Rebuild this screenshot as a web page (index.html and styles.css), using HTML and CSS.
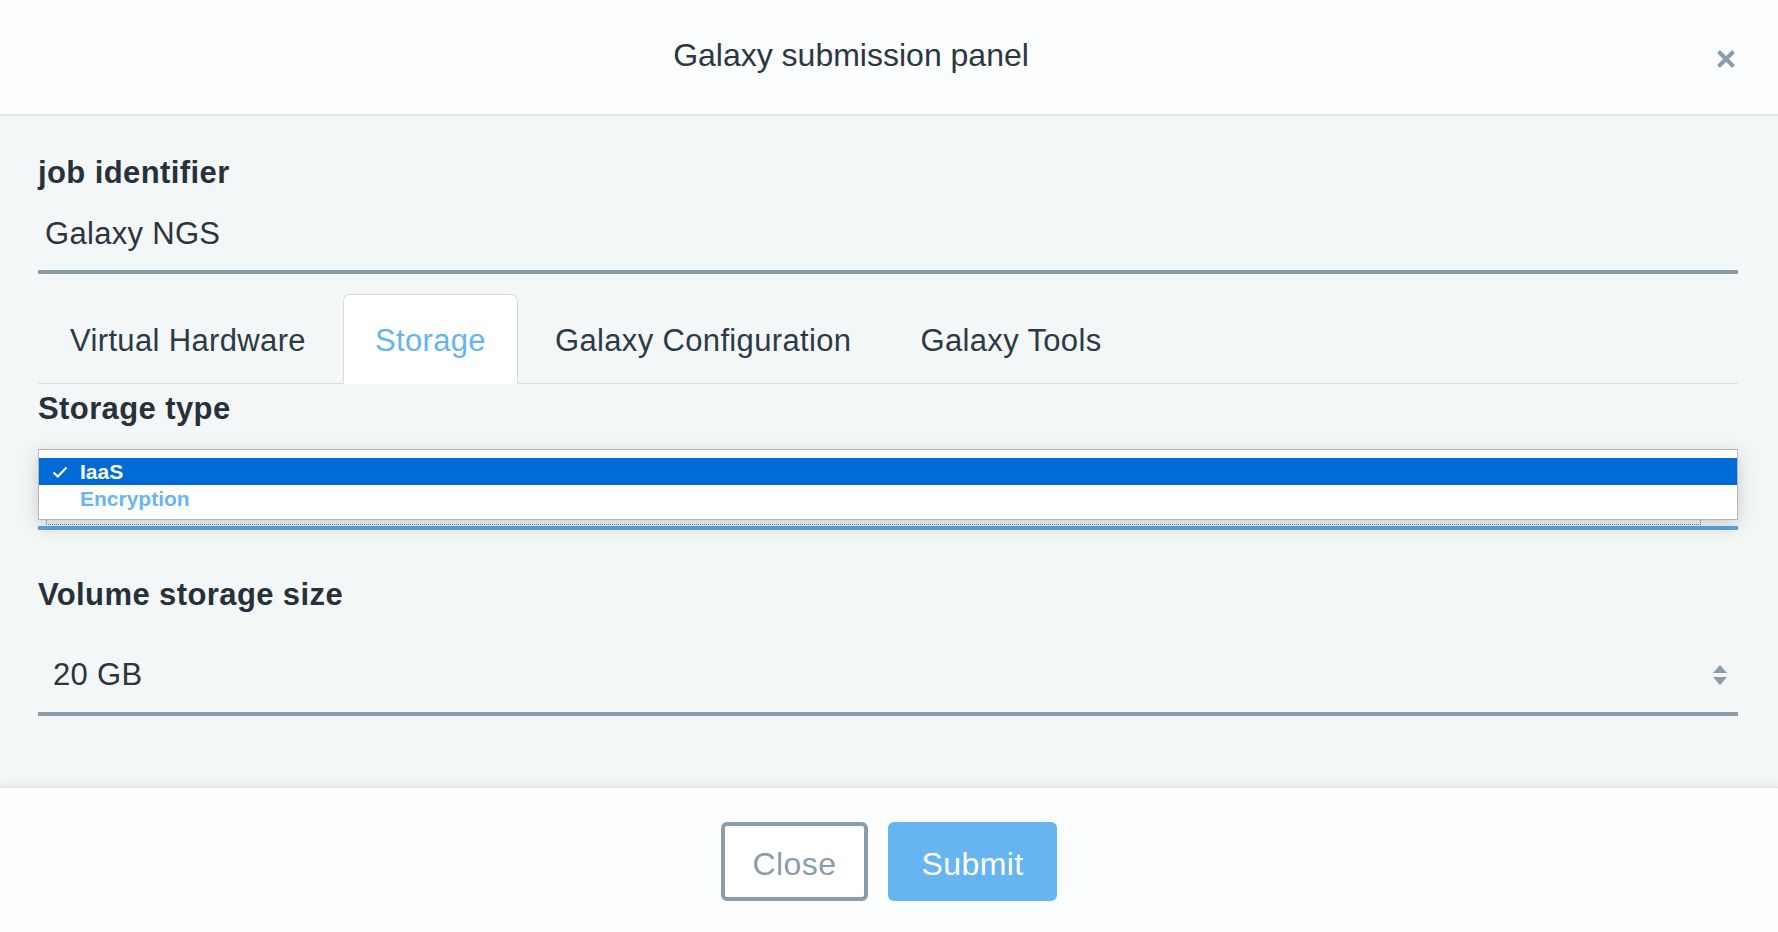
FILE: index.html
```html
<!DOCTYPE html>
<html lang="en">
<head>
<meta charset="utf-8">
<title>Galaxy submission panel</title>
<link rel="stylesheet" href="styles.css">
</head>
<body>
<div class="modal">
  <header class="modal-header">
    <h1 class="modal-title">Galaxy submission panel</h1>
    <button class="close-btn" aria-label="Close">
      <svg width="20" height="20" viewBox="0 0 20 20"><path d="M2.5 2.5 L17.5 17.5 M17.5 2.5 L2.5 17.5" stroke="#8a9dad" stroke-width="4" stroke-linecap="butt" fill="none"/></svg>
    </button>
  </header>

  <main class="modal-body">
    <label class="field-label first">job identifier</label>
    <div class="text-input">Galaxy NGS</div>

    <nav class="tabs">
      <a class="tab">Virtual Hardware</a>
      <a class="tab active">Storage</a>
      <a class="tab">Galaxy Configuration</a>
      <a class="tab">Galaxy Tools</a>
    </nav>

    <section class="tab-pane">
      <label class="field-label storage-label">Storage type</label>
      <div class="select-wrap">
        <div class="focus-ring"></div>
        <ul class="dropdown">
          <li class="option selected">
            <svg class="check" width="16" height="12" viewBox="0 0 16 12"><path d="M1.5 6.5 L5.8 10.5 L14.5 1.5" stroke="#fff" stroke-width="2.2" fill="none"/></svg>
            <span>IaaS</span>
          </li>
          <li class="option">Encryption</li>
        </ul>
      </div>

      <label class="field-label volume-label">Volume storage size</label>
      <div class="number-input">
        <span>20 GB</span>
        <svg class="spinner" width="14" height="20" viewBox="0 0 14 20"><path d="M7 0 L14 8 L0 8 Z M0 12 L14 12 L7 20 Z" fill="#8a9dad"/></svg>
      </div>
    </section>
  </main>

  <footer class="modal-footer">
    <button class="btn btn-outline">Close</button>
    <button class="btn btn-primary">Submit</button>
  </footer>
</div>
</body>
</html>
```

FILE: styles.css
```css
* { box-sizing: border-box; }

html, body {
  margin: 0;
  padding: 0;
  height: 932px;
  overflow: hidden;
}

body {
  font-family: "Liberation Sans", Arial, Helvetica, sans-serif;
  color: #2a3540;
  background: #f4f7f8;
}

.modal {
  display: flex;
  flex-direction: column;
  height: 932px;
}

/* Header */
.modal-header {
  height: 116px;
  flex: 0 0 116px;
  background: #fcfdfe;
  border-bottom: 2px solid #e3e5e8;
  display: flex;
  align-items: flex-start;
}

.modal-title {
  flex: 1;
  margin: 35px 0 0 0;
  padding-right: 14px;
  text-align: center;
  font-weight: normal;
  font-size: 32px;
  line-height: 40px;
  color: #2b3742;
}

.close-btn {
  margin: 49px 42px 0 0;
  width: 20px;
  height: 20px;
  padding: 0;
  border: 0;
  background: none;
  display: flex;
}

/* Body */
.modal-body {
  flex: 1;
  padding: 0 40px 0 38px;
  background: #f4f7f8;
}

.field-label {
  display: block;
  font-weight: bold;
  font-size: 31px;
  letter-spacing: 0.4px;
  line-height: 36px;
  color: #27313a;
}

.field-label.first { margin-top: 39px; }
.field-label.storage-label { margin-top: 7px; }
.field-label.volume-label { margin-top: 47px; }

.text-input {
  height: 83px;
  padding: 7px 0 0 7px;
  border-bottom: 4px solid #8a9dad;
  display: flex;
  align-items: center;
  font-size: 31px;
  letter-spacing: 0.3px;
  color: #2b3540;
}

/* Tabs */
.tabs {
  margin-top: 20px;
  display: flex;
  gap: 5px;
  border-bottom: 1px solid #d9dbdd;
  height: 90px;
}

.tab {
  height: 90px;
  margin-bottom: -1px;
  padding: 3px 31px 0;
  border: 1px solid transparent;
  border-radius: 7px 7px 0 0;
  display: flex;
  align-items: center;
  font-size: 31px;
  letter-spacing: 0.35px;
  color: #2c3a45;
}

.tab.active {
  background: #ffffff;
  border-color: #d9dbdd #d9dbdd #ffffff;
  color: #66b5f0;
}

/* Select with open dropdown */
.select-wrap {
  position: relative;
  height: 103px;
  border-bottom: 4px solid #5ea5dc;
}

.focus-ring {
  position: absolute;
  left: 8px;
  right: 37px;
  top: 40px;
  bottom: 1px;
  border: 1px dotted #4a8fd6;
}

.dropdown {
  position: absolute;
  left: 0;
  right: 0;
  top: 22px;
  height: 71px;
  margin: 0;
  padding: 8px 0 0 0;
  list-style: none;
  background: #ffffff;
  border: 1px solid #b4b6b8;
  box-shadow: 0 5px 18px rgba(0, 0, 0, 0.18);
  z-index: 2;
}

.option {
  position: relative;
  height: 27px;
  padding-left: 41px;
  display: flex;
  align-items: center;
  font-size: 21px;
  font-weight: bold;
  color: #6ab4ef;
}

.option + .option { height: 28px; }

.option.selected {
  background: #006bd6;
  color: #ffffff;
}

.option .check {
  position: absolute;
  left: 13px;
  top: 8px;
}

/* Number input */
.number-input {
  height: 103px;
  padding: 25px 11px 0 15px;
  border-bottom: 4px solid #8a9dad;
  display: flex;
  align-items: center;
  justify-content: space-between;
  font-size: 31px;
  letter-spacing: 0.3px;
  color: #2b3540;
}

/* Footer */
.modal-footer {
  flex: 0 0 145px;
  background: #fcfdfe;
  border-top: 1px solid #e2e4e6;
  box-shadow: 0 -3px 9px rgba(0, 0, 0, 0.06);
  display: flex;
  justify-content: center;
  align-items: flex-start;
  gap: 20px;
  padding-top: 34px;
}

.btn {
  height: 79px;
  font-family: "Liberation Sans", Arial, Helvetica, sans-serif;
  font-size: 32px;
  letter-spacing: 0.4px;
  border-radius: 6px;
  padding: 5px 0 0;
  cursor: pointer;
}

.btn-outline {
  width: 147px;
  background: #ffffff;
  border: 4px solid #8a9dad;
  color: #8a9dad;
}

.btn-primary {
  width: 169px;
  background: #66b5f0;
  border: 0;
  color: #ffffff;
}
```
